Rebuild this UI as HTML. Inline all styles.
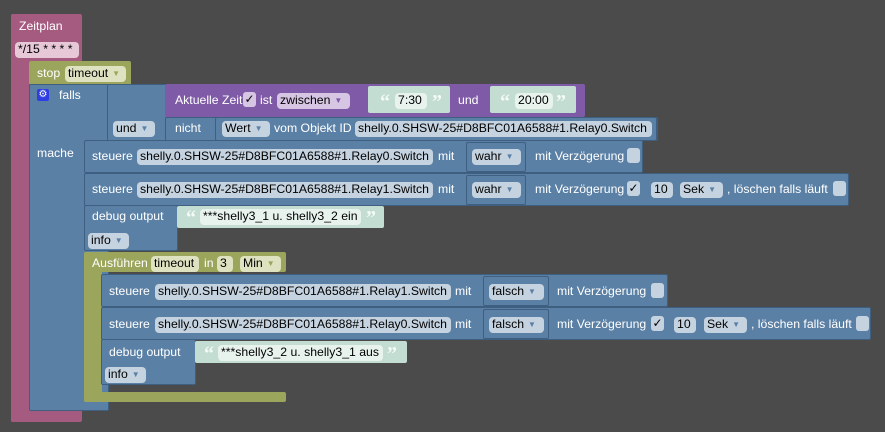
<!DOCTYPE html>
<html><head><meta charset="utf-8"><style>
body{margin:0;width:885px;height:432px;background:#4b4b4b;overflow:hidden;font-family:"Liberation Sans",Arial,sans-serif;font-size:12.25px;position:relative}
.b{position:absolute;border-radius:2px}
.p{background:#a55b80;}
.o{background:#9ba55b;}
.u{background:#5b80a5;border:1px solid #3f5f80;box-sizing:border-box}
.v{background:#7f5aa6;}
.g{background:#c3ddd2;}
.t{position:absolute;color:#fff;white-space:nowrap;line-height:14px}
.f{position:absolute;color:#000;white-space:nowrap;line-height:15px;border-radius:4px;padding:0 2px 0 3px;height:16px;box-sizing:border-box;overflow:hidden}
.fb{background:#c5d3e0}
.fp{background:#e7c8d7}
.fo{background:#dfe2c0}
.fv{background:#d6c5e3}
.fg{background:#e8f3ee}
.ar{color:#5b80a5;font-size:8px;margin-left:4px;vertical-align:1px}
.q{position:absolute;color:#f4faf7;font-weight:bold;font-size:20px;line-height:20px;font-family:"Liberation Serif",serif}
.cb{position:absolute;width:13px;height:15px;border-radius:3px;background:#c5d3e0;color:#000;text-align:center;line-height:15px;font-size:12px}
</style></head><body>
<div class="b p" style="left:11px;top:14px;width:71px;height:48px"></div>
<div class="b p" style="left:11px;top:14px;width:18px;height:408px"></div>
<div class="b p" style="left:11px;top:406px;width:71px;height:16px"></div>
<div class="t" style="left:19px;top:19px">Zeitplan</div>
<div class="f fp" style="left:15px;top:42px;width:64px">*/15 * * * *</div>
<div class="b o" style="left:29px;top:61px;width:102px;height:24px"></div>
<div class="t" style="left:37px;top:66px">stop</div>
<div class="f fo" style="left:65px;top:66px;width:61px">timeout<span class="ar" style="color:#9ba55b">▼</span></div>
<div class="b u" style="left:29px;top:84px;width:80px;height:327px"></div>
<div class="b u" style="left:107px;top:84px;width:60px;height:57px"></div>
<div style="position:absolute;left:37px;top:89px;width:12px;height:12px;background:#2f3ee0;border-radius:2px;color:#fff;font-size:10px;line-height:12px;text-align:center">⚙</div>
<div class="t" style="left:59px;top:88px">falls</div>
<div class="t" style="left:37px;top:146px">mache</div>
<div class="f fb" style="left:113px;top:121px;width:42px">und<span class="ar">▼</span></div>
<div class="b v" style="left:165px;top:84px;width:420px;height:33px"></div>
<div class="t" style="left:175px;top:93px">Aktuelle Zeit</div>
<div class="cb" style="left:243px;top:92px;background:#d6c5e3">✓</div>
<div class="t" style="left:260px;top:93px">ist</div>
<div class="f fv" style="left:277px;top:93px;width:73px">zwischen<span class="ar" style="color:#7f5aa6">▼</span></div>
<div class="b g" style="left:368px;top:86px;width:82px;height:27px"></div>
<div class="q" style="left:380px;top:92px">“</div>
<div class="f fg" style="left:395px;top:93px;width:32px">7:30</div>
<div class="q" style="left:432px;top:92px">”</div>
<div class="t" style="left:458px;top:93px">und</div>
<div class="b g" style="left:490px;top:86px;width:86px;height:27px"></div>
<div class="q" style="left:500px;top:92px">“</div>
<div class="f fg" style="left:515px;top:93px;width:38px">20:00</div>
<div class="q" style="left:556px;top:92px">”</div>
<div class="b u" style="left:165px;top:117px;width:493px;height:24px"></div>
<div class="b u" style="left:215px;top:117px;width:442px;height:24px"></div>
<div class="t" style="left:175px;top:121px">nicht</div>
<div class="f fb" style="left:222px;top:121px;width:48px">Wert<span class="ar">▼</span></div>
<div class="t" style="left:274px;top:121px">vom Objekt ID</div>
<div class="f fb" style="left:355px;top:121px;width:297px">shelly.0.SHSW-25#D8BFC01A6588#1.Relay0.Switch</div>
<div class="b u" style="left:84px;top:140px;width:559px;height:33px"></div>
<div class="t" style="left:92px;top:149px">steuere</div>
<div class="f fb" style="left:137px;top:149px;width:296px">shelly.0.SHSW-25#D8BFC01A6588#1.Relay0.Switch</div>
<div class="t" style="left:438px;top:149px">mit</div>
<div class="b u" style="left:466px;top:142px;width:60px;height:30px"></div>
<div class="f fb" style="left:472px;top:149px;width:49px">wahr<span class="ar">▼</span></div>
<div class="t" style="left:535px;top:149px">mit Verzögerung</div>
<div class="cb" style="left:627px;top:148px"></div>
<div class="b u" style="left:84px;top:173px;width:765px;height:33px"></div>
<div class="t" style="left:92px;top:182px">steuere</div>
<div class="f fb" style="left:137px;top:182px;width:296px">shelly.0.SHSW-25#D8BFC01A6588#1.Relay1.Switch</div>
<div class="t" style="left:438px;top:182px">mit</div>
<div class="b u" style="left:466px;top:175px;width:60px;height:30px"></div>
<div class="f fb" style="left:472px;top:182px;width:49px">wahr<span class="ar">▼</span></div>
<div class="t" style="left:535px;top:182px">mit Verzögerung</div>
<div class="cb" style="left:627px;top:181px">✓</div>
<div class="f fb" style="left:651px;top:182px;width:22px">10</div>
<div class="f fb" style="left:680px;top:182px;width:43px">Sek<span class="ar">▼</span></div>
<div class="t" style="left:727px;top:182px">, löschen falls läuft</div>
<div class="cb" style="left:833px;top:181px"></div>
<div class="b u" style="left:84px;top:205px;width:94px;height:46px"></div>
<div class="t" style="left:92px;top:209px">debug output</div>
<div class="b g" style="left:177px;top:206px;width:207px;height:22px"></div>
<div class="q" style="left:186px;top:208px">“</div>
<div class="f fg" style="left:200px;top:209px;width:161px">***shelly3_1 u. shelly3_2 ein</div>
<div class="q" style="left:366px;top:208px">”</div>
<div class="f fb" style="left:88px;top:233px;width:41px">info<span class="ar">▼</span></div>
<div class="b o" style="left:84px;top:252px;width:202px;height:20px"></div>
<div class="b o" style="left:84px;top:252px;width:18px;height:150px"></div>
<div class="b o" style="left:84px;top:392px;width:202px;height:10px"></div>
<div class="t" style="left:92px;top:256px">Ausführen</div>
<div class="f fo" style="left:151px;top:256px;width:48px">timeout</div>
<div class="t" style="left:204px;top:256px">in</div>
<div class="f fo" style="left:217px;top:256px;width:16px">3</div>
<div class="f fo" style="left:240px;top:256px;width:41px">Min<span class="ar" style="color:#9ba55b">▼</span></div>
<div class="b u" style="left:101px;top:274px;width:567px;height:33px"></div>
<div class="t" style="left:109px;top:284px">steuere</div>
<div class="f fb" style="left:155px;top:284px;width:296px">shelly.0.SHSW-25#D8BFC01A6588#1.Relay1.Switch</div>
<div class="t" style="left:455px;top:284px">mit</div>
<div class="b u" style="left:483px;top:276px;width:66px;height:30px"></div>
<div class="f fb" style="left:489px;top:284px;width:55px">falsch<span class="ar">▼</span></div>
<div class="t" style="left:557px;top:284px">mit Verzögerung</div>
<div class="cb" style="left:651px;top:283px"></div>
<div class="b u" style="left:101px;top:307px;width:770px;height:33px"></div>
<div class="t" style="left:109px;top:317px">steuere</div>
<div class="f fb" style="left:155px;top:317px;width:296px">shelly.0.SHSW-25#D8BFC01A6588#1.Relay0.Switch</div>
<div class="t" style="left:455px;top:317px">mit</div>
<div class="b u" style="left:483px;top:309px;width:66px;height:30px"></div>
<div class="f fb" style="left:489px;top:317px;width:55px">falsch<span class="ar">▼</span></div>
<div class="t" style="left:557px;top:317px">mit Verzögerung</div>
<div class="cb" style="left:651px;top:316px">✓</div>
<div class="f fb" style="left:674px;top:317px;width:22px">10</div>
<div class="f fb" style="left:704px;top:317px;width:43px">Sek<span class="ar">▼</span></div>
<div class="t" style="left:751px;top:317px">, löschen falls läuft</div>
<div class="cb" style="left:856px;top:316px"></div>
<div class="b u" style="left:101px;top:339px;width:95px;height:46px"></div>
<div class="t" style="left:109px;top:345px">debug output</div>
<div class="b g" style="left:195px;top:341px;width:212px;height:22px"></div>
<div class="q" style="left:204px;top:344px">“</div>
<div class="f fg" style="left:218px;top:345px;width:165px">***shelly3_2 u. shelly3_1 aus</div>
<div class="q" style="left:387px;top:344px">”</div>
<div class="f fb" style="left:105px;top:367px;width:41px">info<span class="ar">▼</span></div>
</body></html>
